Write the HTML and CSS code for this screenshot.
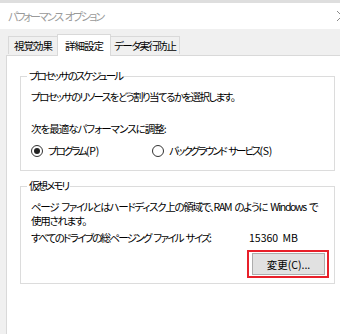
FILE: index.html
```html
<!DOCTYPE html>
<html lang="ja">

<head>
  <meta charset="UTF-8" />
  <title>パフォーマンス オプション</title>
  <link rel="stylesheet" href="styles.css">
</head>

<body>
  <div class="window">
    <!-- Title bar (inactive window) -->
    <div class="titlebar">
      <span class="title">パフォーマンス オプション</span>
      <svg class="close" width="10" height="10" viewBox="0 0 10 10">
        <path d="M0 0 L10 10 M10 0 L0 10" stroke="#8a8a8a" stroke-width="1" />
      </svg>
    </div>

    <div class="client">
      <div class="tabs">
        <div class="tab">視覚効果</div>
        <div class="tab active">詳細設定</div>
        <div class="tab">データ実行防止</div>
      </div>

      <div class="panel">
        <fieldset class="group group-cpu">
          <legend>プロセッサのスケジュール</legend>
          <p class="line tight">プロセッサのリソースをどう割り当てるかを選択します。</p>
          <p class="line adjust">次を最適なパフォーマンスに調整:</p>
          <div class="radios">
            <label class="radio checked"><span class="dot"></span>プログラム<span class="key">(P)</span></label>
            <label class="radio"><span class="dot"></span>バックグラウンド サービス<span class="key">(S)</span></label>
          </div>
        </fieldset>

        <fieldset class="group group-mem">
          <legend>仮想メモリ</legend>
          <p class="para">ページ ファイルとはハードディスク上の領域で、RAM のように Windows で<br>使用されます。</p>
          <div class="size-row">
            <span class="size-label">すべてのドライブの総ページング ファイル サイズ:</span>
            <span class="size-value">15360 MB</span>
          </div>
          <div class="actions">
            <span class="highlight"><button class="btn">変更(C)...</button></span>
          </div>
        </fieldset>
      </div>
    </div>
  </div>
</body>

</html>
```

FILE: styles.css
```css
body {
  margin: 0;
  font-family: "Noto Sans CJK JP", "Noto Sans", sans-serif;
  font-size: 10.5px;
  letter-spacing: -1px;
  word-spacing: 2px;
  font-feature-settings: "palt";
  color: #000;
  background: #f0f0f0;
}

.window {
  width: 340px;
  height: 334px;
  overflow: hidden;
  background: #f0f0f0;
}

/* Title bar */
.titlebar {
  height: 26px;
  border-top: 3px solid #dedede;
  background: #fff;
  display: flex;
  align-items: center;
  justify-content: space-between;
  padding-left: 8px;
}

.title {
  color: #9a9a9a;
  font-size: 11px;
  letter-spacing: -2px;
  word-spacing: 2px;
}

.close {
  margin-right: -7px;
}

/* Tabs */
.client {
  padding-left: 6px;
}

.tabs {
  display: flex;
  align-items: flex-end;
  height: 26px;
  padding-left: 2px;
  position: relative;
  z-index: 1;
}

.tab {
  height: 17px;
  line-height: 17px;
  padding: 0 5px;
  border: 1px solid #d9d9d9;
  border-bottom: none;
  background: #f0f0f0;
  margin-bottom: 1px;
  white-space: nowrap;
}

.tab + .tab {
  margin-left: -1px;
}

.tab.active {
  height: 21px;
  line-height: 21px;
  padding: 0 7px;
  background: #fff;
  margin-bottom: -1px;
}

.tab:last-child {
  padding: 0 3px;
  letter-spacing: -1.4px;
}

.panel {
  background: #fff;
  border: 1px solid #d9d9d9;
  border-right: none;
  height: 300px;
  padding: 0 5px 0 13px;
}

/* Group boxes */
.group {
  margin: 12px 0 0;
  padding: 0 0 0 10px;
  border: 1px solid #dcdcdc;
}

.group legend {
  padding: 0 2px;
  margin-left: -4px;
  line-height: 16px;
  letter-spacing: -1.9px;
}

.group-cpu {
  padding-top: 5px;
  padding-bottom: 11px;
}

.group-mem {
  margin-top: 7px;
  padding-top: 6px;
  padding-bottom: 5px;
}

.line {
  margin: 0;
  line-height: 16px;
  white-space: nowrap;
}

.tight {
  letter-spacing: -1.6px;
}

.adjust {
  margin-top: 16px;
}

.radios {
  display: flex;
  margin-top: 6px;
  line-height: 16px;
  white-space: nowrap;
  letter-spacing: -2px;
}

.radio {
  display: flex;
  align-items: center;
  width: 121px;
  flex-shrink: 0;
}

.key {
  letter-spacing: -0.3px;
}

.dot {
  flex-shrink: 0;
  width: 10px;
  height: 10px;
  border: 1px solid #333;
  border-radius: 50%;
  margin-right: 5px;
  display: flex;
  align-items: center;
  justify-content: center;
}

.radio.checked .dot::after {
  content: "";
  width: 6px;
  height: 6px;
  border-radius: 50%;
  background: #222;
}

.para {
  margin: 0;
  line-height: 14px;
  white-space: nowrap;
  letter-spacing: -1.3px;
}

.size-row {
  display: flex;
  margin-top: 3px;
  line-height: 14px;
  white-space: nowrap;
}

.size-label {
  width: 218px;
  letter-spacing: -1.7px;
}

.size-value {
  letter-spacing: 0;
}

.actions {
  display: flex;
  justify-content: flex-end;
  margin-top: 5px;
  padding-right: 5px;
}

.highlight {
  border: 2px solid #e8202a;
  padding: 1px 2px 1px 3px;
}

.btn {
  display: block;
  width: 73px;
  height: 22px;
  font: inherit;
  letter-spacing: 0;
  background: #e1e1e1;
  border: 1px solid #adadad;
  color: #000;
  padding: 0;
}
```
